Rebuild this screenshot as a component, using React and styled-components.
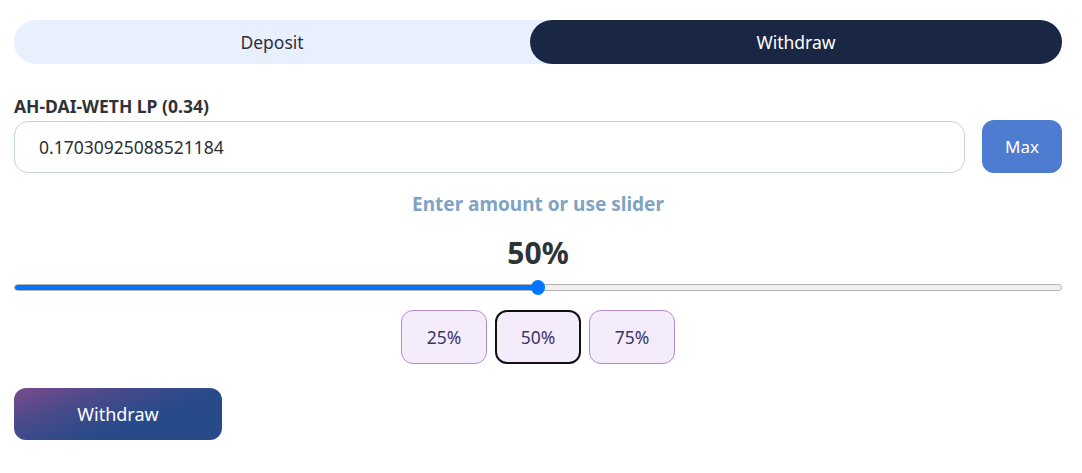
import React, { useState } from "react";
import styled, { createGlobalStyle } from "styled-components";

const GlobalStyle = createGlobalStyle`
    body {
        margin: 0;
        background: #ffffff;
        font-family: "Noto Sans", "Open Sans", sans-serif;
    }
`;

const Panel = styled.div`
    padding: 20px 20px 20px 14px;
    display: flex;
    flex-direction: column;
`;

const Tabs = styled.div`
    display: grid;
    grid-template-columns: 516fr 532fr;
    height: 44px;
    background: #e8f0fe;
    border-radius: 22px;
`;

const Tab = styled.button`
    border: none;
    border-radius: 22px;
    font-family: inherit;
    font-size: 17.5px;
    cursor: pointer;
    background: ${(p) => (p.$active ? "#1a2744" : "transparent")};
    color: ${(p) => (p.$active ? "#ffffff" : "#2b2f38")};
`;

const Label = styled.div`
    margin-top: 31px;
    font-size: 17.5px;
    font-weight: 700;
    color: #2f3237;
    line-height: 22px;
`;

const InputRow = styled.div`
    margin-top: 3px;
    display: flex;
    gap: 17px;
    align-items: center;
`;

const AmountInput = styled.input`
    flex: 1;
    height: 52px;
    box-sizing: border-box;
    border: 1px solid #c3d3e2;
    border-radius: 14px;
    padding: 0 24px;
    font-family: inherit;
    font-size: 17.5px;
    color: #2b2f38;
    outline: none;
`;

const MaxButton = styled.button`
    width: 80px;
    height: 53px;
    border: none;
    border-radius: 12px;
    background: #4e7cd0;
    color: #ffffff;
    font-family: inherit;
    font-size: 17px;
`;

const Hint = styled.div`
    margin-top: 19px;
    text-align: center;
    font-size: 19px;
    font-weight: 700;
    color: #7ea3c3;
    line-height: 24px;
`;

const Percent = styled.div`
    margin-top: 20px;
    text-align: center;
    font-size: 30px;
    font-weight: 700;
    color: #2d3436;
    line-height: 34px;
`;

const SliderWrap = styled.div`
    position: relative;
    margin-top: 10px;
    height: 14px;
    display: flex;
    align-items: center;
`;

const Track = styled.div`
    flex: 1;
    height: 7px;
    box-sizing: border-box;
    border: 1px solid #b3b3b3;
    border-radius: 4px;
    background: #efefef;
    overflow: hidden;
    display: flex;
`;

const Fill = styled.div`
    height: 100%;
    background: #0075ff;
`;

const Thumb = styled.div`
    position: absolute;
    top: 0;
    width: 14px;
    height: 15px;
    margin-left: -7px;
    border-radius: 50%;
    background: #0075ff;
`;

const Chips = styled.div`
    margin-top: 16px;
    display: flex;
    justify-content: center;
    gap: 8px;
`;

const Chip = styled.button`
    width: 86px;
    height: 54px;
    box-sizing: border-box;
    border-radius: 12px;
    background: #f4ecfb;
    border: ${(p) => (p.$active ? "2px solid #111111" : "1px solid #b58bd6")};
    color: #3b3566;
    font-family: inherit;
    font-size: 17.5px;
`;

const SubmitButton = styled.button`
    margin-top: 24px;
    width: 208px;
    height: 52px;
    border: none;
    border-radius: 12px;
    background: linear-gradient(160deg, #7a4a8d 0%, #4a4a8a 30%, #284a8a 60%, #274a8a 100%);
    color: #ffffff;
    font-family: inherit;
    font-size: 18px;
`;

const App = () => {
    const [pct, setPct] = useState(50);

    return (
        <>
            <GlobalStyle />
            <Panel>
                <Tabs>
                    <Tab>Deposit</Tab>
                    <Tab $active>Withdraw</Tab>
                </Tabs>
                <Label>AH-DAI-WETH LP (0.34)</Label>
                <InputRow>
                    <AmountInput defaultValue="0.17030925088521184" />
                    <MaxButton>Max</MaxButton>
                </InputRow>
                <Hint>Enter amount or use slider</Hint>
                <Percent>{pct}%</Percent>
                <SliderWrap>
                    <Track>
                        <Fill style={{ width: `${pct}%` }} />
                    </Track>
                    <Thumb style={{ left: `${pct}%` }} />
                </SliderWrap>
                <Chips>
                    {[25, 50, 75].map((v) => (
                        <Chip key={v} $active={v === pct} onClick={() => setPct(v)}>
                            {v}%
                        </Chip>
                    ))}
                </Chips>
                <div>
                    <SubmitButton>Withdraw</SubmitButton>
                </div>
            </Panel>
        </>
    );
};

export default App;
